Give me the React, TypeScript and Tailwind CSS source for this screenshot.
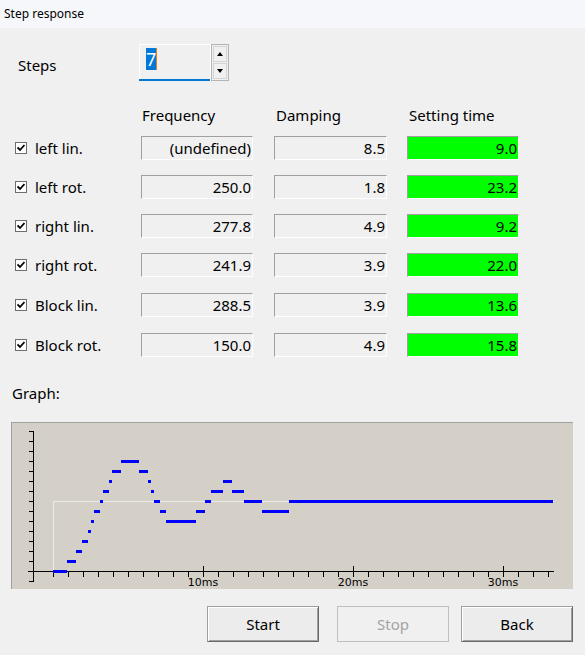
const font = "font-['Noto_Sans',sans-serif]";

const rows = [
  { name: "left lin.", freq: "(undefined)", damp: "8.5", settle: "9.0", gap: "mt-0" },
  { name: "left rot.", freq: "250.0", damp: "1.8", settle: "23.2", gap: "mt-[15px]" },
  { name: "right lin.", freq: "277.8", damp: "4.9", settle: "9.2", gap: "mt-[15px]" },
  { name: "right rot.", freq: "241.9", damp: "3.9", settle: "22.0", gap: "mt-[15px]" },
  { name: "Block lin.", freq: "288.5", damp: "3.9", settle: "13.6", gap: "mt-[16px]" },
  { name: "Block rot.", freq: "150.0", damp: "4.9", settle: "15.8", gap: "mt-[16px]" },
];

// [x1, x2, y] in page pixels
const segs: [number, number, number][] = [
  [52, 66, 570], [66, 75, 560], [75, 81, 550], [81, 87, 540], [87, 90, 530],
  [90, 93, 520], [93, 99, 510], [99, 102, 500], [102, 108, 490], [108, 111, 480],
  [111, 120, 470], [120, 138, 460], [138, 147, 470], [147, 150, 480], [150, 153, 490],
  [153, 159, 500], [159, 165, 510], [165, 195, 520], [195, 204, 510], [204, 210, 500],
  [210, 222, 490], [222, 231, 480], [231, 243, 490], [243, 261, 500], [261, 288, 510],
  [288, 552, 500],
];

function Field({ value, green }: { value: string; green?: boolean }) {
  return (
    <div
      className={`h-[24px] border border-t-[#a0a0a0] border-l-[#a0a0a0] border-r-white border-b-white flex items-center justify-end pr-[1px] text-[15px] leading-none text-black ${
        green ? "bg-[#00ff00]" : "bg-[#f0f0f0]"
      }`}
    >
      {value}
    </div>
  );
}

function Check() {
  return (
    <div className="w-[12px] h-[12px] bg-white border border-[#6d6d6d] flex items-center justify-center">
      <svg width="8" height="8" viewBox="0 0 8 8">
        <path d="M0.5 3.5 L3 6 L7.5 1" stroke="black" strokeWidth="1.8" fill="none" />
      </svg>
    </div>
  );
}

function Graph() {
  const yTicks = Array.from({ length: 16 }, (_, i) => 430 + i * 10);
  const xTicks = Array.from({ length: 34 }, (_, i) => i);
  return (
    <svg width="562" height="167" className="block" shapeRendering="crispEdges">
      <g transform="translate(-11,-422)">
        <line x1="52.5" y1="500" x2="52.5" y2="570" stroke="#ebebeb" />
        <line x1="52" y1="500.5" x2="553" y2="500.5" stroke="#ebebeb" />
        <line x1="32.5" y1="430" x2="32.5" y2="581" stroke="black" />
        <line x1="27" y1="570.5" x2="553" y2="570.5" stroke="black" />
        {yTicks.map((y) => (
          <line key={y} x1="28" y1={y + 0.5} x2="32" y2={y + 0.5} stroke="black" />
        ))}
        {xTicks.map((k) => {
          const x = 52.5 + k * 15;
          const major = k % 10 === 0 && k > 0;
          return (
            <line key={k} x1={x} y1={major ? 565 : 570} x2={x} y2="576" stroke="black" />
          );
        })}
        {segs.map(([a, b, y], i) => (
          <rect key={i} x={a} y={y - 1} width={b - a} height="3" fill="#0000ff" />
        ))}
        {[10, 20, 30].map((ms) => (
          <text
            key={ms}
            x={52 + ms * 15}
            y="585"
            textAnchor="middle"
            fontSize="11"
            fontFamily="'DejaVu Sans', sans-serif"
            fill="black"
            shapeRendering="auto"
          >
            {ms}ms
          </text>
        ))}
      </g>
    </svg>
  );
}

function Button({ label, disabled }: { label: string; disabled?: boolean }) {
  return (
    <div
      className={`w-[112px] h-[36px] flex items-center justify-center text-[15px] ${
        disabled
          ? "border border-[#bfbfbf] bg-[#f0f0f0] text-[#a3a3a3]"
          : "border border-t-[#a0a0a0] border-l-[#a0a0a0] border-r-[#696969] border-b-[#696969] bg-[#ececec] text-black shadow-[inset_1px_1px_0_#ffffff,inset_-1px_-1px_0_#a0a0a0]"
      }`}
    >
      {label}
    </div>
  );
}

export default function App() {
  return (
    <div className={`w-[585px] h-[655px] bg-[#f0f0f0] ${font} text-black overflow-hidden`}>
      <div className="h-[28px] bg-[#f5f7fa] flex items-center pl-[4px] text-[12px]">Step response</div>

      <div className="flex items-start h-[37px] mt-[16px]">
        <div className="w-[139px] pl-[18px] pt-[10px] text-[15px] leading-[22px]">Steps</div>
        <div className="relative w-[72px] h-[37px] border border-white border-b-0 bg-[#f0f0f0]">
          <div className="absolute left-[6px] top-[3px] h-[22px] w-[10px] bg-[#0078d7] text-white text-[18px] leading-[22px] text-center">
            7
          </div>
          <div className="absolute left-[16px] top-[3px] w-[1px] h-[22px] bg-[#e8801a]" />
          <div className="absolute -left-[1px] right-0 bottom-0 h-[2px] bg-[#0078d7]" />
        </div>
        <div className="w-[18px] h-[37px] border border-[#b4b4b4] flex flex-col gap-[1px] p-[1px]">
          <div className="flex-1 bg-[#f0f0f0] border border-[#d4d4d4] flex items-center justify-center">
            <svg width="6" height="4" viewBox="0 0 6 4">
              <path d="M3 0 L6 4 L0 4 Z" fill="black" />
            </svg>
          </div>
          <div className="flex-1 bg-[#f0f0f0] border border-[#d4d4d4] flex items-center justify-center">
            <svg width="6" height="4" viewBox="0 0 6 4">
              <path d="M0 0 L6 0 L3 4 Z" fill="black" />
            </svg>
          </div>
        </div>
      </div>

      <div className="flex mt-[22px] h-[25px] items-center text-[15px]">
        <div className="w-[142px]" />
        <div className="w-[134px]">Frequency</div>
        <div className="w-[133px]">Damping</div>
        <div>Setting time</div>
      </div>

      <div className="flex flex-col mt-[8px]">
        {rows.map((r) => (
          <div key={r.name} className={`flex items-center h-[24px] ${r.gap}`}>
            <div className="w-[141px] pl-[15px] flex items-center gap-[8px] text-[15px]">
              <Check />
              <span>{r.name}</span>
            </div>
            <div className="w-[112px]">
              <Field value={r.freq} />
            </div>
            <div className="w-[113px] ml-[21px]">
              <Field value={r.damp} />
            </div>
            <div className="w-[112px] ml-[20px]">
              <Field value={r.settle} green />
            </div>
          </div>
        ))}
      </div>

      <div className="mt-[25px] pl-[12px] text-[15px] h-[22px] flex items-center">Graph:</div>

      <div className="ml-[11px] mt-[18px] w-[562px] h-[167px] bg-[#d4d0c8] border-t border-l border-[#a0a0a0] overflow-hidden">
        <Graph />
      </div>

      <div className="flex pl-[207px] mt-[17px]">
        <Button label="Start" />
        <div className="ml-[18px]">
          <Button label="Stop" disabled />
        </div>
        <div className="ml-[12px]">
          <Button label="Back" />
        </div>
      </div>
    </div>
  );
}
